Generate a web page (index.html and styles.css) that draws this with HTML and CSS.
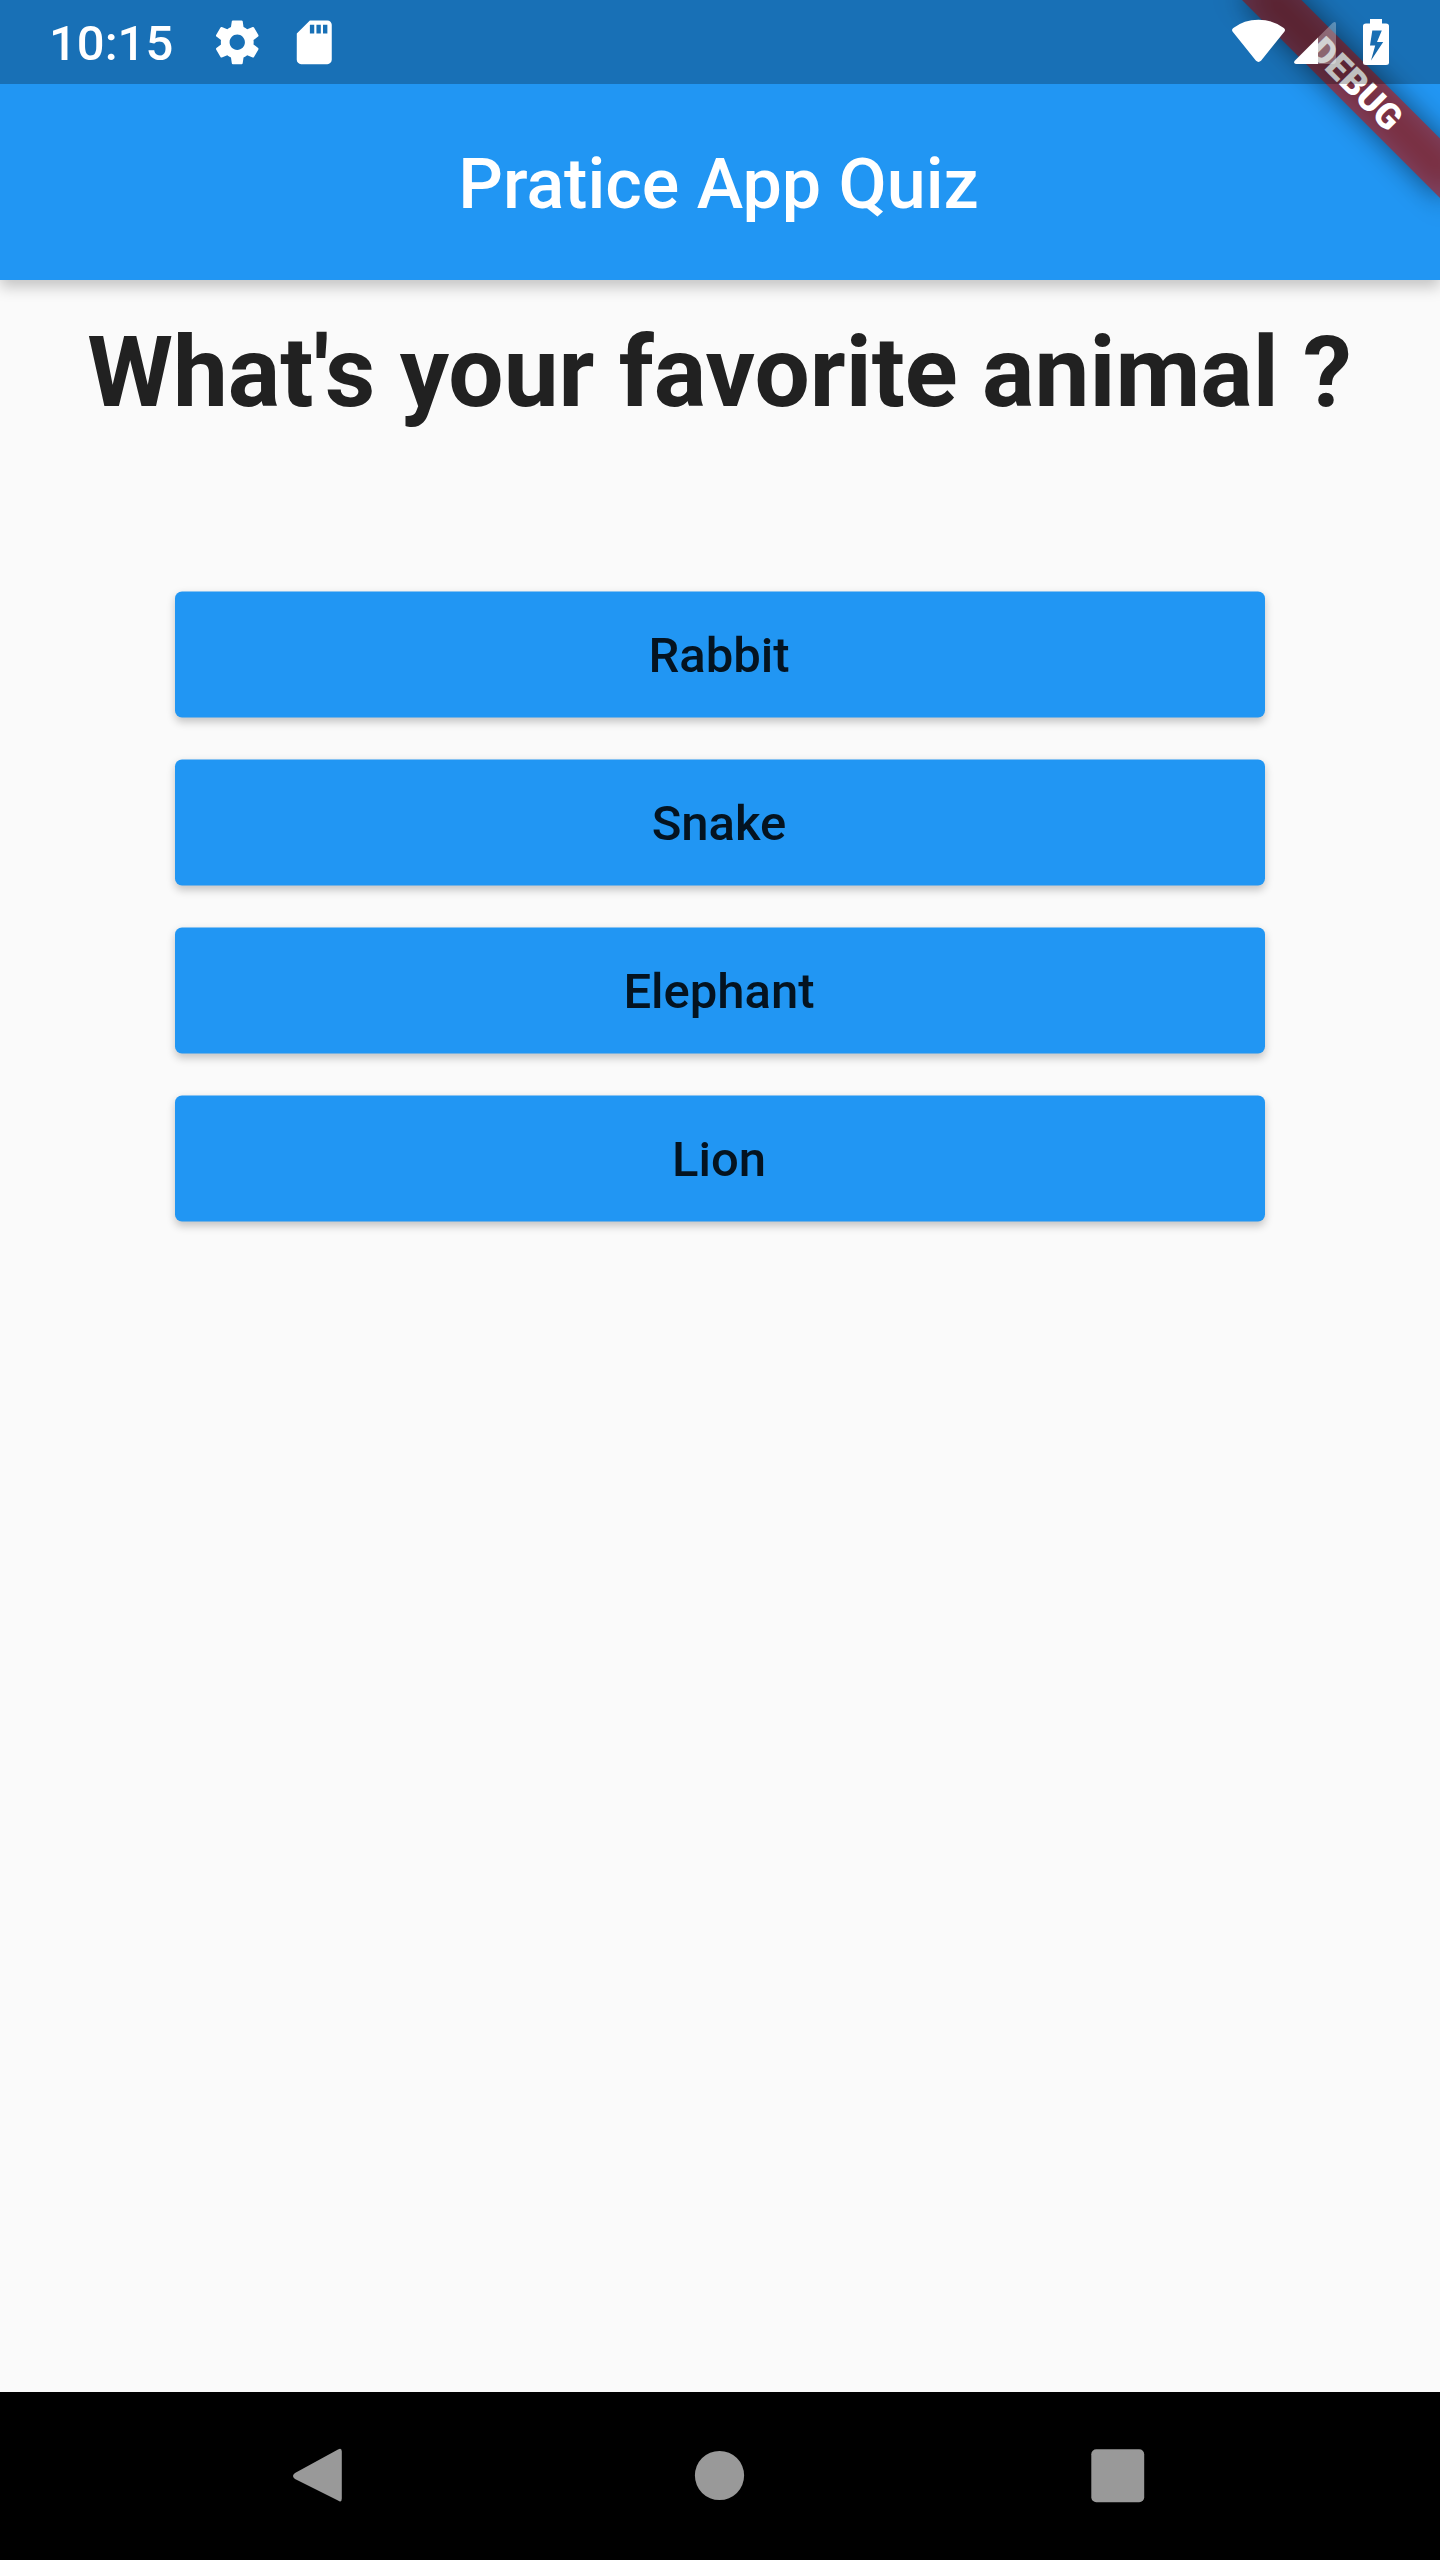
FILE: index.html
```html
<!DOCTYPE html>
<html lang="en">
<head>
<meta charset="utf-8">
<title>Pratice App Quiz</title>
<link rel="stylesheet" href="styles.css">
</head>
<body>
<div class="screen">
  <header class="app-bar">
    <h1 class="app-title">Pratice App Quiz</h1>
  </header>
  <main class="quiz">
    <h2 class="question">What's your favorite animal ?</h2>
    <div class="answers">
      <button class="answer">Rabbit</button>
      <button class="answer">Snake</button>
      <button class="answer">Elephant</button>
      <button class="answer">Lion</button>
    </div>
  </main>
  <nav class="nav-bar">
    <svg class="nav-icon" viewBox="0 0 70 70"><path d="M56.800 10.500V57.500Q56.800 62 53 59.500L10 38Q6 35 10 32L53 8.500Q56.800 6.500 56.800 10.500Z"/></svg>
    <svg class="nav-icon" viewBox="0 0 70 70"><circle cx="34.500" cy="34.500" r="24.600"/></svg>
    <svg class="nav-icon" viewBox="0 0 70 70"><rect x="7.300" y="8.300" width="52.900" height="53" rx="5"/></svg>
  </nav>

  <div class="debug-banner"><span class="debug-label">DEBUG</span></div>

  <div class="status-bar">
    <div class="status-left">
      <span class="clock">10:15</span>
      <svg class="status-icon gear" viewBox="0 0 24 24"><path d="M19.430 12.980c.04-.32.07-.64.07-.98s-.03-.66-.07-.98l2.110-1.650c.19-.15.24-.42.12-.64l-2-3.460c-.12-.22-.39-.3-.61-.22l-2.490 1c-.52-.4-1.080-.73-1.690-.98l-.38-2.650C14.460 2.180 14.250 2 14 2h-4c-.25 0-.46.18-.49.42l-.38 2.650c-.61.25-1.170.59-1.690.98l-2.490-1c-.23-.09-.49 0-.61.22l-2 3.460c-.13.22-.07.49.12.64l2.110 1.650c-.04.32-.07.65-.07.98s.03.66.07.98l-2.110 1.650c-.19.15-.24.42-.12.64l2 3.460c.12.22.39.3.61.22l2.490-1c.52.4 1.080.73 1.690.98l.38 2.650c.03.24.24.42.49.42h4c.25 0 .46-.18.49-.42l.38-2.650c.61-.25 1.170-.59 1.690-.98l2.490 1c.23.09.49 0 .61-.22l2-3.460c.12-.22.07-.49-.12-.64l-2.110-1.650zM12 15.500c-1.930 0-3.500-1.570-3.500-3.500s1.570-3.500 3.500-3.500 3.500 1.570 3.500 3.500-1.570 3.500-3.500 3.500z"/></svg>
      <svg class="status-icon" viewBox="0 0 24 24"><path d="M18 2h-8L4.020 8 4 20c0 1.100.9 2 2 2h12c1.100 0 2-.9 2-2V4c0-1.100-.9-2-2-2zm-6 6h-2V4h2v4zm3 0h-2V4h2v4zm3 0h-2V4h2v4z"/></svg>
    </div>
    <svg class="status-right" viewBox="0 0 220 84">
      <path d="M12.500 31.500Q11.300 29.500 13.300 28Q24 19.700 38.500 19.700T63.800 28Q65.800 29.500 64.500 31.500L41 60.800Q38.500 63 36 60.800Z"/>
      <path opacity=".3" d="M98 37.500L112.500 23Q116 20.500 116 24V61Q116 64 113 64H98Z"/>
      <path d="M98 37.500V64H76.500Q73 63.500 74.500 61Z"/>
      <path fill-rule="evenodd" d="M150 19H162V23.500H166Q169 23.500 169 26V62.500Q169 65 166 65H146Q143 65 143 62.500V26Q143 23.500 146 23.500H150ZM152.300 30.500L150 45.500H155.200L151 60.500L163.200 42H157L161.800 30.500Z"/>
    </svg>
  </div>
</div>
</body>
</html>
```
FILE: styles.css
```css
* {
  box-sizing: border-box;
}

body {
  margin: 0;
  font-family: Roboto, "Liberation Sans", sans-serif;
}

.screen {
  position: relative;
  display: flex;
  flex-direction: column;
  width: 1440px;
  height: 2560px;
  overflow: hidden;
  background: #fafafa;
}

.app-bar {
  display: flex;
  align-items: center;
  justify-content: center;
  height: 280px;
  padding: 87px 3px 0 0;
  background: #2196f3;
  box-shadow: 0 7px 14px rgba(0, 0, 0, 0.22);
}

.app-title {
  margin: 0;
  font-size: 70px;
  font-weight: 500;
  line-height: 82px;
  color: #fff;
}

.quiz {
  flex: 1;
  padding: 35px 35px 0;
}

.question {
  margin: 0;
  padding-right: 1px;
  font-size: 98px;
  font-weight: 700;
  line-height: 115px;
  text-align: center;
  white-space: nowrap;
  color: #212121;
}

.answers {
  display: flex;
  flex-direction: column;
  gap: 42px;
  padding: 161px 140px 0;
}

.answer {
  height: 126px;
  padding: 2px 2px 0 0;
  border: 0;
  border-radius: 7px;
  background: #2196f3;
  box-shadow: 0 4px 8px rgba(0, 0, 0, 0.22);
  font: 500 49px/58px Roboto, "Liberation Sans", sans-serif;
  color: rgba(0, 0, 0, 0.87);
  transform: translateY(0.5px);
}

.nav-bar {
  display: flex;
  align-items: center;
  justify-content: space-between;
  height: 168px;
  padding: 0 286px 0 285px;
  background: #000;
}

.nav-icon {
  width: 70px;
  height: 70px;
  fill: #999;
}

/* Diagonal ribbon pinned across the top right corner */
.debug-banner {
  position: absolute;
  top: 98px;
  left: 1300px;
  display: flex;
  align-items: center;
  justify-content: center;
  width: 280px;
  height: 42px;
  transform: rotate(45deg);
  transform-origin: 140px -98px;
}

.debug-banner::before,
.debug-banner::after {
  content: "";
  position: absolute;
  inset: 0;
}

.debug-banner::before {
  background: rgba(0, 0, 0, 0.5);
  filter: blur(13.9px);
}

.debug-banner::after {
  background: rgba(183, 28, 28, 0.627);
}

.debug-label {
  position: relative;
  z-index: 1;
  font-size: 35.7px;
  font-weight: 900;
  line-height: 36px;
  color: #fff;
}

/* Translucent system bar laid over the app */
.status-bar {
  position: absolute;
  top: 0;
  left: 0;
  display: flex;
  align-items: center;
  justify-content: space-between;
  width: 1440px;
  height: 84px;
  background: rgba(0, 0, 0, 0.25);
}

.status-left {
  display: flex;
  align-items: center;
  padding-left: 49px;
}

.clock {
  width: 162px;
  padding-top: 4px;
  font-size: 49px;
  font-weight: 500;
  line-height: 58px;
  color: #fff;
}

.status-icon {
  width: 52.5px;
  height: 52.5px;
  fill: #fff;
}

.gear {
  margin-right: 24.5px;
}

.status-right {
  width: 220px;
  height: 84px;
  fill: #fff;
}
```
